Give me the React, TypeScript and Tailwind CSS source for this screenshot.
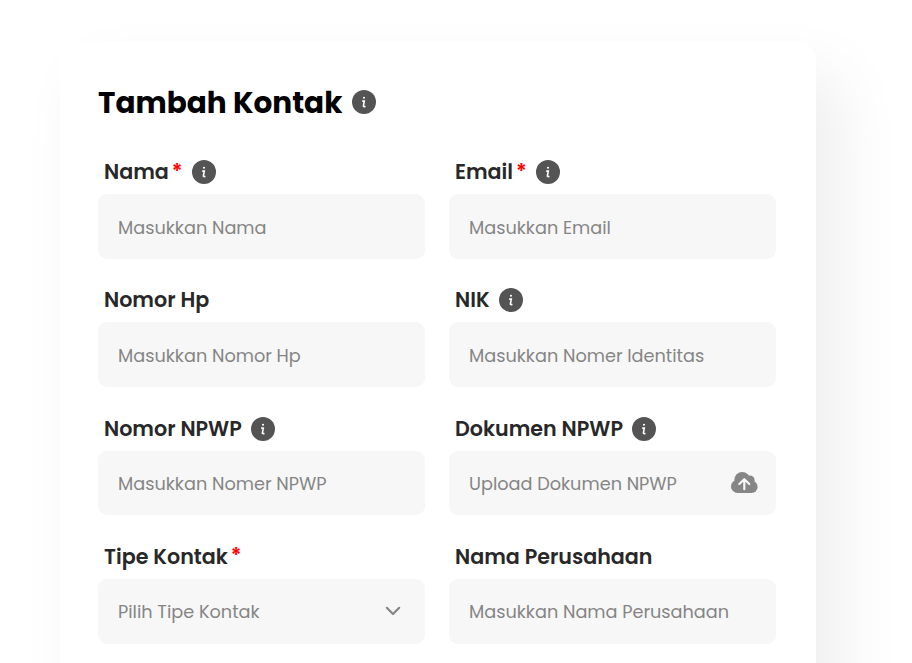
import { useState } from "react";

type Field = {
  id: string;
  label: string;
  placeholder: string;
  required?: boolean;
  info?: boolean;
  trailing?: "upload" | "chevron";
};

const fields: Field[] = [
  { id: "nama", label: "Nama", placeholder: "Masukkan Nama", required: true, info: true },
  { id: "email", label: "Email", placeholder: "Masukkan Email", required: true, info: true },
  { id: "hp", label: "Nomor Hp", placeholder: "Masukkan Nomor Hp" },
  { id: "nik", label: "NIK", placeholder: "Masukkan Nomer Identitas", info: true },
  { id: "npwp", label: "Nomor NPWP", placeholder: "Masukkan Nomer NPWP", info: true },
  { id: "dokumen", label: "Dokumen NPWP", placeholder: "Upload Dokumen NPWP", info: true, trailing: "upload" },
  { id: "tipe", label: "Tipe Kontak", placeholder: "Pilih Tipe Kontak", required: true, trailing: "chevron" },
  { id: "perusahaan", label: "Nama Perusahaan", placeholder: "Masukkan Nama Perusahaan" },
];

function InfoIcon({ className = "" }: { className?: string }) {
  return (
    <svg viewBox="0 0 24 24" className={`size-6 shrink-0 ${className}`}>
      <circle cx="12" cy="12" r="12" fill="#545454" />
      <circle cx="12" cy="7.8" r="1.05" fill="#fff" />
      <path
        d="M10.2 11.1h2.1l-.9 4.7q-.2 1.2 2.1.7"
        fill="none"
        stroke="#fff"
        strokeWidth="1.6"
      />
    </svg>
  );
}

function UploadIcon() {
  return (
    <svg viewBox="0 0 27 21" className="h-[21px] w-[27px] shrink-0">
      <g fill="#868686">
        <circle cx="6.6" cy="14.4" r="6.6" />
        <circle cx="11.2" cy="7.8" r="7.8" />
        <circle cx="18.8" cy="8.2" r="4.8" />
        <circle cx="20.5" cy="14.9" r="6.1" />
        <path d="M6.6 10h14v11h-14z" />
      </g>
      <path
        d="M13.3 17.2V7.6M8.3 12l5-4.8 5 4.8"
        fill="none"
        stroke="#f7f7f7"
        strokeWidth="2.2"
        strokeLinecap="round"
        strokeLinejoin="round"
      />
    </svg>
  );
}

function ChevronIcon() {
  return (
    <svg viewBox="0 0 16 10" className="mr-[5.5px] h-2.5 w-4 shrink-0">
      <path
        d="M1.8 1.8 8 8l6.2-6.2"
        fill="none"
        stroke="#858585"
        strokeWidth="2.2"
        strokeLinecap="round"
        strokeLinejoin="round"
      />
    </svg>
  );
}

export default function App() {
  const [values, setValues] = useState<Record<string, string>>({});

  return (
    <main className="h-[663px] overflow-hidden bg-white pt-[42px] pl-[60px] font-[Poppins,Inter,sans-serif]">
      <div className="h-[720px] w-[756px] rounded-[18px] bg-white pt-[42px] pl-[38px] shadow-[24px_32px_66px_rgba(0,0,0,0.07)]">
        <div className="flex h-9 items-center">
          <h1 className="pt-px text-[29.5px] leading-9 font-bold whitespace-nowrap text-black">Tambah Kontak</h1>
          <InfoIcon className="ml-[9.5px]" />
        </div>

        <form className="mt-[34px] grid w-[678.3px] grid-cols-2 gap-x-[23.7px] gap-y-[23.6px]">
          {fields.map((f) => (
            <div key={f.id}>
              <label
                htmlFor={f.id}
                className="flex h-10 items-center pb-1 pl-1.5 text-[20.65px] font-semibold whitespace-nowrap text-[#282828]"
              >
                <span className="pt-px">{f.label}</span>
                {f.required ? <span className="ml-[3px] text-[#ff0000]">*</span> : null}
                {f.info ? <InfoIcon className="ml-[9.5px]" /> : null}
              </label>
              <div className="flex h-[64.7px] items-center rounded-[9px] bg-[#f7f7f7] pr-[18.6px] pl-5">
                <input
                  id={f.id}
                  value={values[f.id] ?? ""}
                  onChange={(e) => setValues({ ...values, [f.id]: e.target.value })}
                  placeholder={f.placeholder}
                  className="min-w-0 flex-1 bg-transparent pt-[3px] text-[17.7px] text-[#282828] outline-none placeholder:text-[#858585]"
                />
                {f.trailing === "upload" ? <UploadIcon /> : null}
                {f.trailing === "chevron" ? <ChevronIcon /> : null}
              </div>
            </div>
          ))}
        </form>
      </div>
    </main>
  );
}
